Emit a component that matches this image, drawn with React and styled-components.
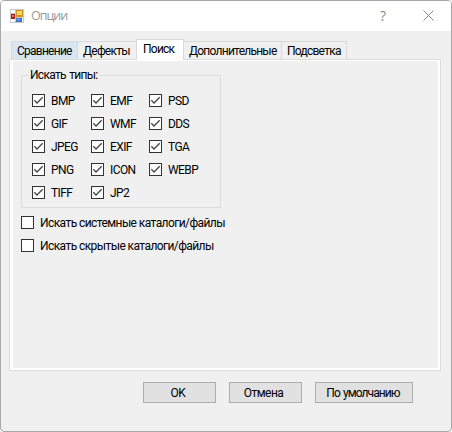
import React from "react";
import styled, { createGlobalStyle } from "styled-components";

const Global = createGlobalStyle`
  * { box-sizing: border-box; }
  body { margin: 0; background: #fff; overflow: hidden; }
`;

const Window = styled.main`
  width: 452px;
  height: 432px;
  display: flex;
  flex-direction: column;
  background: #f0f0f0;
  border: 1px solid #a8a8a8;
  border-radius: 4px;
  color: #000;
  font: 12px/14px Roboto, "Liberation Sans", sans-serif;
  letter-spacing: -0.58px;
`;
const TitleBar = styled.header`
  height: 30px;
  flex: none;
  display: flex;
  align-items: center;
  padding: 0 17px 0 9px;
  background: #fff;
  border-radius: 3px 3px 0 0;
  color: #999;
`;
const Title = styled.h1`
  flex: 1;
  margin: 0 0 0 7px;
  font: 12.5px/16px "Open Sans", "Noto Sans", sans-serif;
  letter-spacing: -1px;
`;
const TitleButton = styled.button`
  display: flex;
  padding: 0;
  border: 0;
  background: none;
  color: #888;
  font: 14px/16px "Open Sans", sans-serif;
  margin: -1px 0 0 ${(p) => p.$gap || 0}px;
`;
const Tabs = styled.nav`
  height: 28px;
  flex: none;
  display: flex;
  align-items: flex-end;
  padding-left: 10px;
`;
const Tab = styled.button`
  width: ${(p) => p.$width}px;
  height: ${(p) => (p.$active ? 21 : 18)}px;
  margin-bottom: ${(p) => (p.$active ? -1 : 0)}px;
  padding: ${(p) => (p.$active ? "0 0 3px 6px" : "1px 0 0 5px")};
  text-align: left;
  position: relative;
  z-index: ${(p) => (p.$active ? 1 : 0)};
  border: solid #d9d9d9;
  border-width: 1px ${(p) => (p.$last || p.$active ? 1 : 0)}px 0 ${(p) => (p.$flush ? 0 : 1)}px;
  background: ${(p) => (p.$active ? "#fff" : p.$hot ? "#d8e6f2" : "#f0f0f0")};
  font: inherit;
  color: inherit;
  letter-spacing: -0.75px;
  white-space: nowrap;
`;
const Panel = styled.section`
  width: 432px;
  height: 312px;
  flex: none;
  margin-left: 8px;
  padding: 6px 0 0 11px;
  border: 1px solid #dcdcdc;
  box-shadow: inset 3px 1px #fff, inset -2px -2px #fff;
`;
const Group = styled.fieldset`
  width: 200px;
  height: 140px;
  margin: 2px 0 0;
  padding: 0;
  border: 1px solid #dcdcdc;
  min-width: 0;
`;
const Legend = styled.legend`
  margin: 0 0 0 7px;
  padding: 0 2px 0 1px;
  letter-spacing: -0.7px;
  word-spacing: 1px;
`;
const Types = styled.div`
  display: grid;
  grid-template-columns: 59px 58px 70px;
  grid-auto-rows: 23px;
  padding: 12px 0 0 10px;
`;
const CheckRow = styled.label`
  height: 13px;
  display: flex;
  align-items: center;
  gap: 6px;
  margin-top: ${(p) => p.$top || 0}px;
  white-space: nowrap;
`;
const Box = styled.svg`
  width: 13px;
  height: 13px;
  flex: none;
`;
const Actions = styled.footer`
  display: flex;
  gap: 13px;
  padding: 11px 0 0 142px;
`;
const Button = styled.button`
  width: ${(p) => p.$width}px;
  height: 21px;
  padding: 0 ${(p) => p.$shift || 0}px 0 0;
  border: 1px solid #adadad;
  background: #e1e1e1;
  font: inherit;
  color: inherit;
  letter-spacing: ${(p) => p.$spacing || -0.5}px;
  word-spacing: 1px;
`;

function Check({ text, checked, top }) {
  return (
    <CheckRow $top={top}>
      <Box viewBox="0 0 13 13">
        <rect x=".5" y=".5" width="12" height="12" fill="#fff" stroke="#333" />
        {checked && <path d="M2.3 6.3 5 9 10.7 3.3" fill="none" stroke="#444" strokeWidth="1.3" />}
      </Box>
      <span>{text}</span>
    </CheckRow>
  );
}

function FormIcon() {
  return (
    <svg width="14" height="14" viewBox="0 0 14 14" shapeRendering="crispEdges">
      <rect width="14" height="14" fill="#c9c9c9" />
      <path d="M1 1h4v3H1zM1 10h4v3H1zM12 9h1v4h-1z" fill="#fff" />
      <rect x="6" y="1" width="7" height="7" fill="#d6941f" />
      <rect x="7" y="2" width="5" height="4" fill="#ffd765" />
      <rect x="1" y="5" width="4" height="5" fill="#a81c17" />
      <rect x="2" y="6" width="2" height="2" fill="#e27c70" />
      <rect x="6" y="9" width="6" height="4" fill="#3c76d2" />
      <rect x="7" y="10" width="3" height="1" fill="#8cb9f4" />
    </svg>
  );
}

const types = ["BMP", "EMF", "PSD", "GIF", "WMF", "DDS", "JPEG", "EXIF", "TGA", "PNG", "ICON", "WEBP", "TIFF", "JP2"];

export default function App() {
  return (
    <>
      <Global />
      <Window>
        <TitleBar>
          <FormIcon />
          <Title>Опции</Title>
          <TitleButton>?</TitleButton>
          <TitleButton $gap={37}>
            <svg width="11" height="11" viewBox="0 0 11 11">
              <path d="m.5.5 10 10m0-10-10 10" stroke="#888" />
            </svg>
          </TitleButton>
        </TitleBar>
        <Tabs>
          <Tab $width={66} $hot>Сравнение</Tab>
          <Tab $width={59}>Дефекты</Tab>
          <Tab $width={48} $active>Поиск</Tab>
          <Tab $width={97} $flush>Дополнительные</Tab>
          <Tab $width={66} $last>Подсветка</Tab>
        </Tabs>
        <Panel>
          <Group>
            <Legend>Искать типы:</Legend>
            <Types>
              {types.map((t) => <Check key={t} text={t} checked />)}
            </Types>
          </Group>
          <Check top={8} text="Искать системные каталоги/файлы" />
          <Check top={10} text="Искать скрытые каталоги/файлы" />
        </Panel>
        <Actions>
          <Button $width={73} $shift={3}>OK</Button>
          <Button $width={73} $shift={4}>Отмена</Button>
          <Button $width={98} $shift={2} $spacing={-0.9}>По умолчанию</Button>
        </Actions>
      </Window>
    </>
  );
}
